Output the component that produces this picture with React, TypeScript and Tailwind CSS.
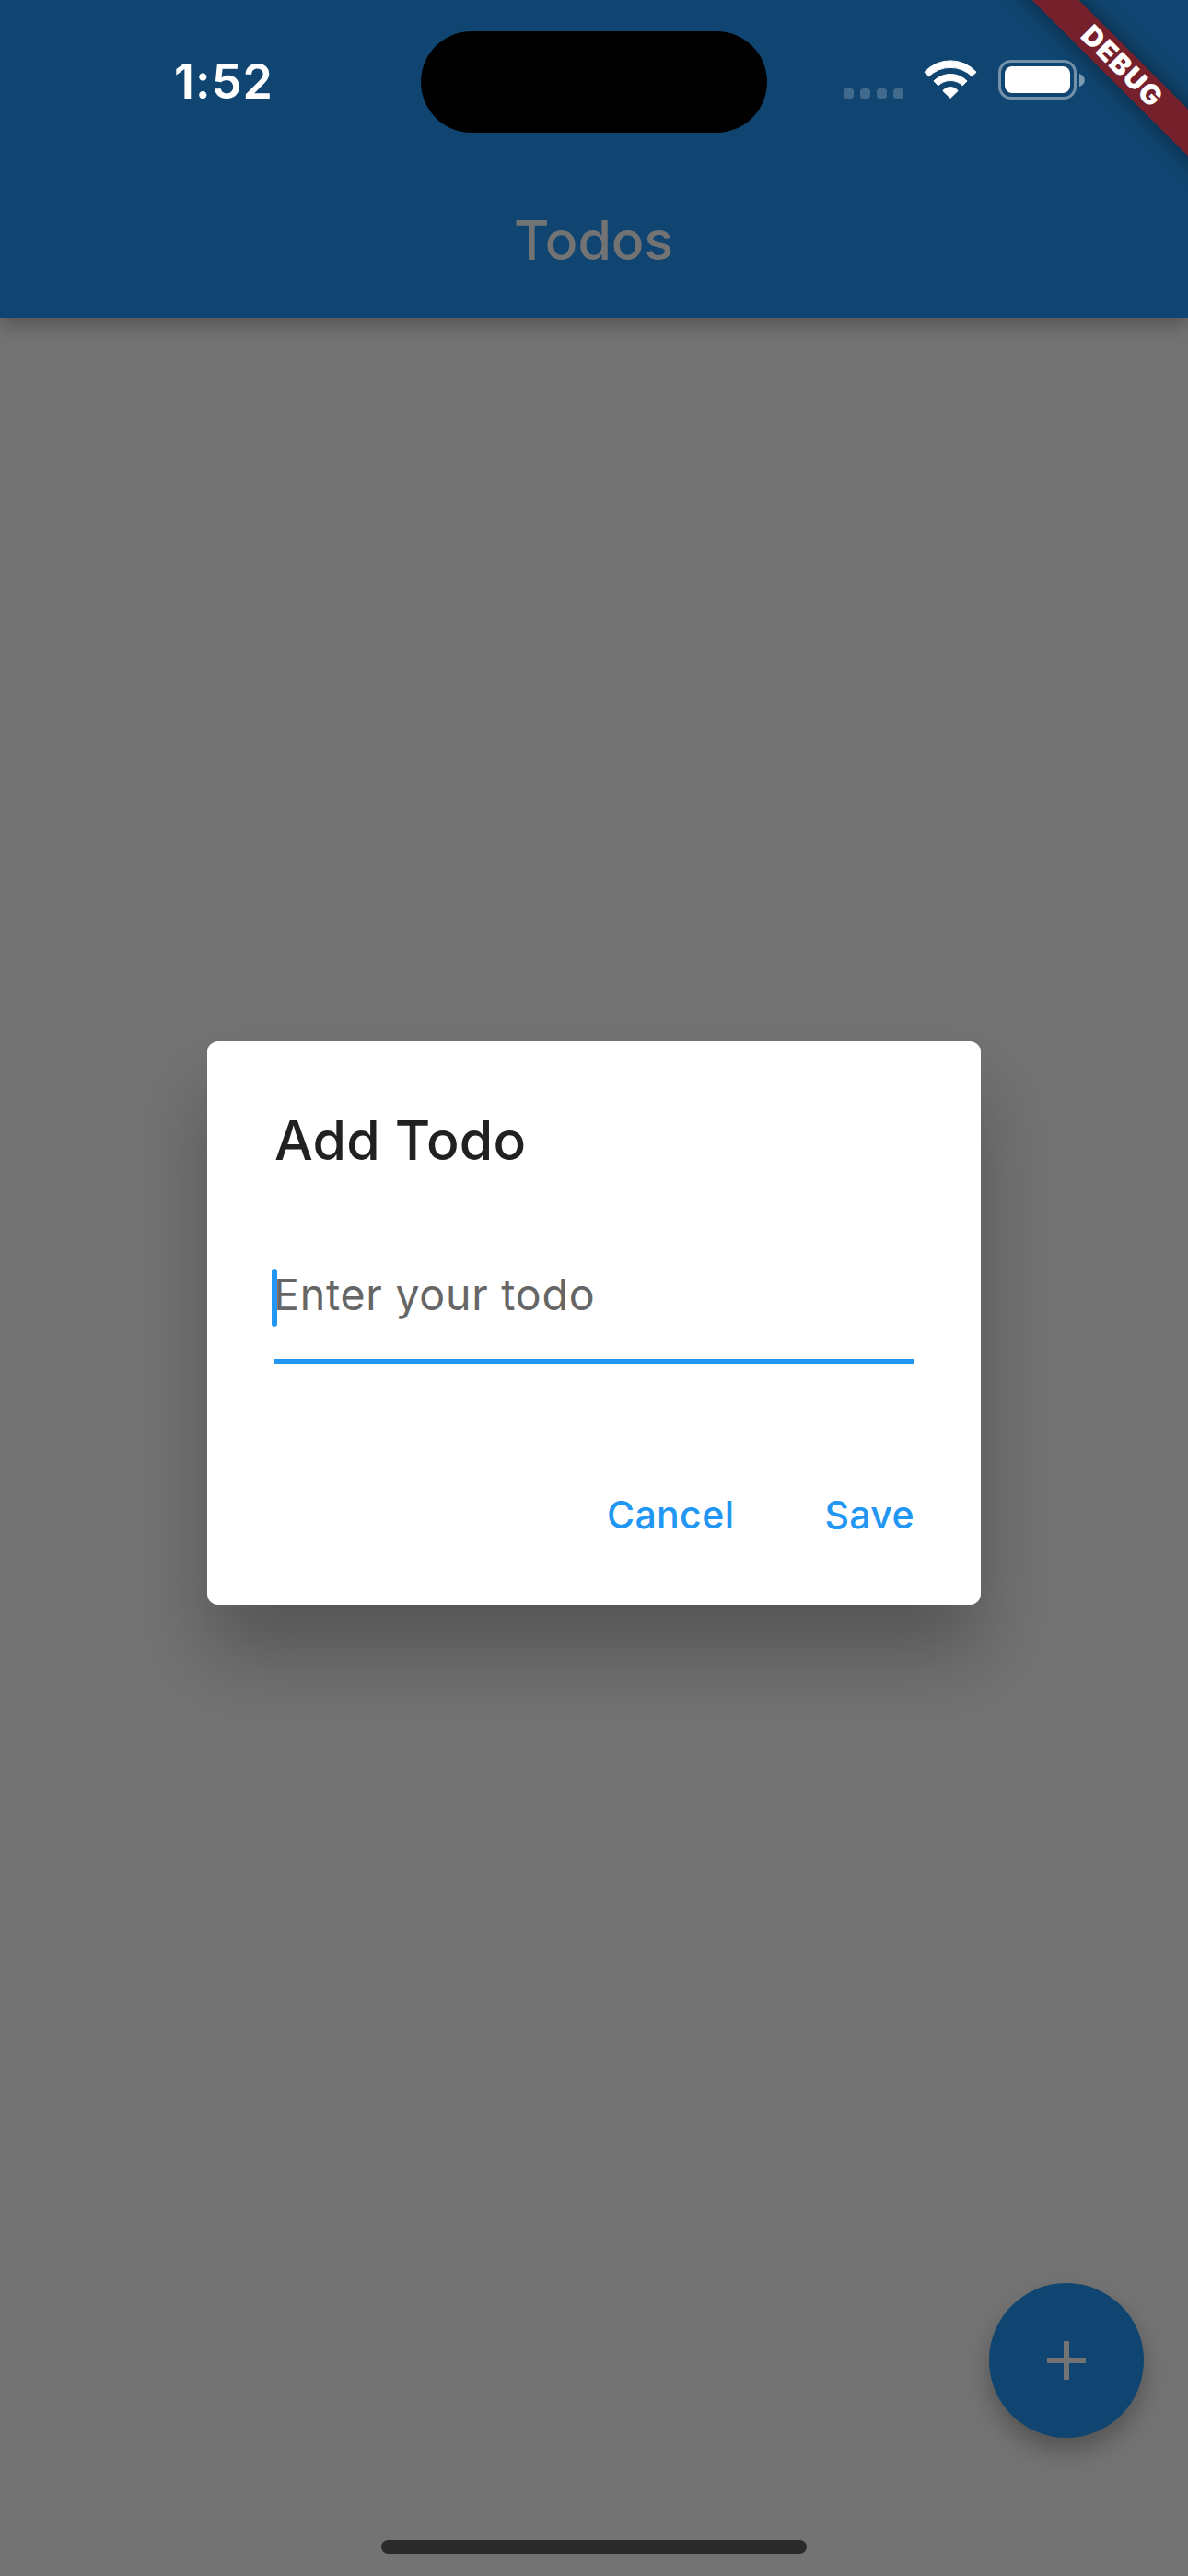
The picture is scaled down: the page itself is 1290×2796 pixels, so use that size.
function WifiIcon() {
  return (
    <svg width="58" height="42" viewBox="0 0 58 42" fill="white" stroke="white" strokeWidth="1" strokeLinejoin="round" aria-hidden="true">
      <path d="M0.9 13.3A38 38 0 0 1 57.1 13.3L52.3 17.8A33.5 33.5 0 0 0 5.7 17.8Z" />
      <path d="M10.9 23A25.5 25.5 0 0 1 47.1 23L42.2 27.8A19.2 19.2 0 0 0 15.8 27.8Z" />
      <path d="M20.8 33.5A10.6 10.6 0 0 1 37.2 33.5L29 41.4Z" />
    </svg>
  );
}

function BatteryIcon() {
  return (
    <div className="flex items-center gap-[3px]">
      <div className="h-[43px] w-[85px] rounded-[14px] border-[3px] border-[#7391aa] p-[4px]">
        <div className="h-[29px] w-[71px] rounded-[8px] bg-white" />
      </div>
      <svg width="6" height="14" viewBox="0 0 6 14" fill="#7f9bb2" aria-hidden="true">
        <path d="M0 0C3.4 1.2 5.8 3.8 5.8 7S3.4 12.8 0 14Z" />
      </svg>
    </div>
  );
}

function StatusBar() {
  return (
    <div className="absolute inset-x-0 top-0 flex h-[177px] items-start justify-between pr-[112px] pl-[189px]">
      <span className="w-[268px] pt-[59px] text-[52px] leading-[60px] font-semibold tracking-[1.1px] text-white">
        1:52
      </span>
      <div className="mt-[34px] h-[110px] w-[376px] rounded-full bg-black" />
      <div className="flex w-[345px] items-end justify-end pt-[65px]">
        <div className="mb-px flex gap-[7px]">
          {[0, 1, 2, 3].map((dot) => (
            <span key={dot} className="size-[11px] rounded-[3.5px] bg-[#426a8d]" />
          ))}
        </div>
        <div className="mb-px ml-[22px]">
          <WifiIcon />
        </div>
        <div className="ml-[23px]">
          <BatteryIcon />
        </div>
      </div>
    </div>
  );
}

function DebugBanner() {
  return (
    <div className="absolute top-0 right-0 size-[260px] overflow-hidden">
      <div className="absolute top-[53.5px] left-[-12px] flex h-[36px] w-[400px] rotate-45 items-center justify-center bg-[#76202b] pb-[2.5px] pl-px text-[30px] leading-none font-black tracking-[1.3px] text-white shadow-[0_0_22px_rgba(0,0,0,0.45)]">
        DEBUG
      </div>
    </div>
  );
}

function AddTodoDialog() {
  return (
    <div className="absolute inset-0 flex items-center justify-center pt-[177px] pb-[102px]">
      <div
        role="dialog"
        className="flex h-[612px] w-[840px] flex-col rounded-[12px] bg-white px-[72px] pt-[72px] pb-[25px] shadow-[0_54px_84px_rgba(0,0,0,0.26)]"
      >
        <h2 className="pl-[1px] text-[59px] leading-[72px] font-medium tracking-[0.2px] text-[#212121]">Add Todo</h2>
        <div className="relative mt-[60px] flex h-[147px] border-b-[6px] border-[#2196f3]">
          <span className="text-[46.5px] leading-[142px] tracking-[0.75px] text-[#666666]">Enter your todo</span>
          <span className="absolute top-[43.5px] left-[-2px] h-[63px] w-[6px] rounded-[3px] bg-[#2196f3]" />
        </div>
        <div className="mt-auto flex h-[144px] items-center justify-end gap-[98px] text-[41px] font-medium tracking-[0.4px] text-[#2196f3]">
          <button>Cancel</button>
          <button>Save</button>
        </div>
      </div>
    </div>
  );
}

export default function App() {
  return (
    <div className="relative flex h-[2796px] w-[1290px] flex-col overflow-hidden bg-[#737373] font-[Inter,sans-serif]">
      <header className="flex h-[345px] shrink-0 items-center justify-center bg-[#0f4570] pt-[177px] pr-px shadow-[0_10px_18px_-1px_rgba(0,0,0,0.25)]">
        <h1 className="text-[59px] leading-[72px] font-[550] tracking-[-0.1px] text-[#737373]">Todos</h1>
      </header>
      <main className="flex flex-1 items-end justify-end pr-[48px] pb-[150px]">
        <button
          aria-label="Add"
          className="flex size-[168px] items-center justify-center rounded-full bg-[#0f4570] shadow-[0_14px_26px_rgba(0,0,0,0.27)]"
        >
          <svg width="42" height="42" viewBox="0 0 42 42" fill="#737373" aria-hidden="true">
            <path d="M18 0h6v18h18v6H24v18h-6V24H0v-6h18Z" />
          </svg>
        </button>
      </main>
      <AddTodoDialog />
      <div className="absolute bottom-[24px] left-[414px] h-[15px] w-[462px] rounded-full bg-[#2a2a2a]" />
      <StatusBar />
      <DebugBanner />
    </div>
  );
}
